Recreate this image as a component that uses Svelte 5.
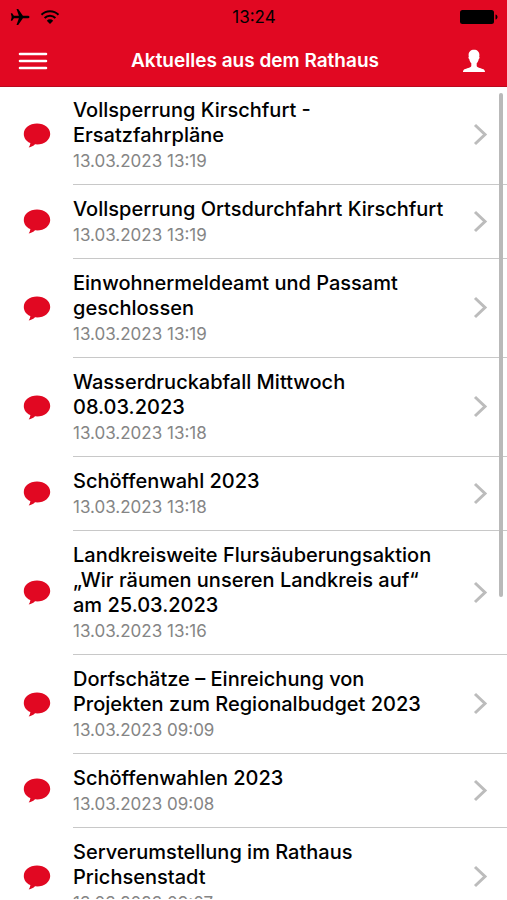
<script>
  const title = 'Aktuelles aus dem Rathaus';

  const news = [
    { id: 1, title: 'Vollsperrung Kirschfurt - Ersatzfahrpläne', date: '13.03.2023 13:19' },
    { id: 2, title: 'Vollsperrung Ortsdurchfahrt Kirschfurt', date: '13.03.2023 13:19' },
    { id: 3, title: 'Einwohnermeldeamt und Passamt geschlossen', date: '13.03.2023 13:19' },
    { id: 4, title: 'Wasserdruckabfall Mittwoch 08.03.2023', date: '13.03.2023 13:18' },
    { id: 5, title: 'Schöffenwahl 2023', date: '13.03.2023 13:18' },
    { id: 6, title: 'Landkreisweite Flursäuberungsaktion „Wir räumen unseren Landkreis auf“ am 25.03.2023', date: '13.03.2023 13:16' },
    { id: 7, title: 'Dorfschätze – Einreichung von Projekten zum Regionalbudget 2023', date: '13.03.2023 09:09' },
    { id: 8, title: 'Schöffenwahlen 2023', date: '13.03.2023 09:08' },
    { id: 9, title: 'Serverumstellung im Rathaus Prichsenstadt', date: '13.03.2023 09:07' },
  ];
</script>

<div class="app">
  <header>
    <div class="status">
      <div class="signals">
        <svg width="20" height="18" viewBox="0 0 20 18" aria-hidden="true">
          <path d="M19.5 9c0-.8-.9-1.3-2-1.3h-4.600L8.200 1H6.500l2.400 6.700H3.900L2.200 5.300H.8L1.700 9 .8 12.700h1.400l1.700-2.400h5L6.500 17h1.700l4.700-6.700h4.600c1.100 0 2-.5 2-1.300z" />
        </svg>
        <svg width="20" height="16" viewBox="0 0 20 16" aria-hidden="true">
          <g fill="none" stroke="#000" stroke-width="2">
            <path d="M1.500 5.700a12 12 0 0 1 17 0" />
            <path d="M4.600 9a7.600 7.600 0 0 1 10.800 0" />
          </g>
          <path d="M10 15l-3.200-3.300a4.500 4.500 0 0 1 6.400 0z" />
        </svg>
      </div>
      <span class="time">13:24</span>
      <svg class="battery" width="38" height="14" viewBox="0 0 38 14" aria-hidden="true">
        <rect width="34" height="14" rx="2.500" />
        <path d="M35.500 4.500c1.300.3 2 1.300 2 2.500s-.7 2.200-2 2.500z" />
      </svg>
    </div>
    <nav>
      <button type="button" aria-label="Menü">
        <svg width="30" height="20" viewBox="0 0 30 20">
          <path d="M2 3h26M2 10h26M2 17h26" fill="none" stroke="#fff" stroke-width="2.600" stroke-linecap="round" />
        </svg>
      </button>
      <h1>{title}</h1>
      <button type="button" aria-label="Profil">
        <svg width="24" height="24" viewBox="0 0 24 24">
          <path
            d="M12 .8c-3.300 0-5.400 2-5.400 5.200 0 .7.100 1.200.2 1.700-.6.300-.5 1.700.5 2.500.3 1.800 1 3.100 2 4v2.500c0 1.200-1 1.700-3 2.300C3.200 19.900 1 20.400 1 23h22c0-2.600-2.200-3.100-5.300-4-2-.6-3-1.100-3-2.300v-2.500c1-.9 1.700-2.200 2-4 1-.8 1.100-2.200.5-2.500.1-.5.2-1 .2-1.700C17.400 2.800 15.300.8 12 .8z"
            fill="#fff"
          />
        </svg>
      </button>
    </nav>
  </header>

  <main>
    <ul>
      {#each news as item (item.id)}
        <li>
          <a href="#news-{item.id}">
            <svg class="bubble" width="28" height="28" viewBox="0 0 28 28" aria-hidden="true">
              <path d="M14 1.500C6.500 1.500.8 6.100.8 11.900c0 4 2.500 7.400 6.600 9.200-.2 1.700-.8 3.200-1.700 4.400 2.500-.4 4.700-1.500 6.300-3.200.7.100 1.300.1 2 .1 7.500 0 13.200-4.700 13.200-10.500S21.500 1.500 14 1.500z" />
            </svg>
            <span class="body">
              <span class="text">
                <span class="headline">{item.title}</span>
                <time>{item.date}</time>
              </span>
              <svg class="chevron" width="16" height="24" viewBox="0 0 16 24" aria-hidden="true">
                <path d="M3 2L13 11.500 3 21" />
              </svg>
            </span>
          </a>
        </li>
      {/each}
    </ul>
    <div class="scrollbar"></div>
  </main>
</div>

<style>
  :global(body) {
    margin: 0;
    background: #fff;
  }

  .app {
    display: flex;
    flex-direction: column;
    height: 100vh;
    overflow: hidden;
    font-family: Inter, 'Liberation Sans', sans-serif;
  }

  header {
    flex: none;
    background: #e10822;
    border-bottom: 1px solid #b90a20;
  }

  .status {
    display: grid;
    grid-template-columns: 1fr auto 1fr;
    align-items: center;
    height: 34px;
    padding: 0 9px 0 10px;
  }

  .signals {
    display: flex;
    align-items: center;
    gap: 10px;
  }

  .time {
    font-size: 17px;
    line-height: 24px;
  }

  .battery {
    justify-self: end;
  }

  nav {
    display: flex;
    align-items: center;
    justify-content: space-between;
    height: 50px;
    padding: 2px 21px 0 18px;
  }

  button {
    display: flex;
    padding: 0;
    border: 0;
    background: none;
    cursor: pointer;
  }

  h1 {
    margin: 0;
    color: #fff;
    font-size: 19px;
    font-weight: 600;
    line-height: 26px;
  }

  main {
    position: relative;
    flex: 1;
    min-height: 0;
  }

  ul {
    box-sizing: border-box;
    height: 100%;
    margin: 0;
    padding: 0;
    list-style: none;
    overflow-y: auto;
    scrollbar-width: none;
  }

  /* rows close up by the divider under the header */
  ul {
    margin-top: -1px;
  }

  a {
    display: flex;
    align-items: center;
    gap: 22px;
    padding-left: 23px;
    color: #000;
    text-decoration: none;
  }

  .bubble {
    flex: none;
    fill: #e10822;
  }

  .body {
    display: flex;
    flex: 1;
    align-items: center;
    justify-content: space-between;
    gap: 24px;
    padding-right: 19px;
    border-bottom: 1px solid #c8c8c8;
  }

  .text {
    padding: 12px 0 10px;
  }

  .headline,
  time {
    display: block;
  }

  .headline {
    font-size: 20px;
    font-weight: 500;
    line-height: 25px;
  }

  time {
    color: #858585;
    font-size: 17px;
    line-height: 26px;
  }

  .chevron {
    flex: none;
    fill: none;
    stroke: #bcbcbc;
    stroke-width: 3;
  }

  /* overlay indicator over the list */
  .scrollbar {
    position: absolute;
    top: 6px;
    right: 4px;
    width: 4px;
    height: 62%;
    border-radius: 2px;
    background: #b9b9b9;
  }
</style>
